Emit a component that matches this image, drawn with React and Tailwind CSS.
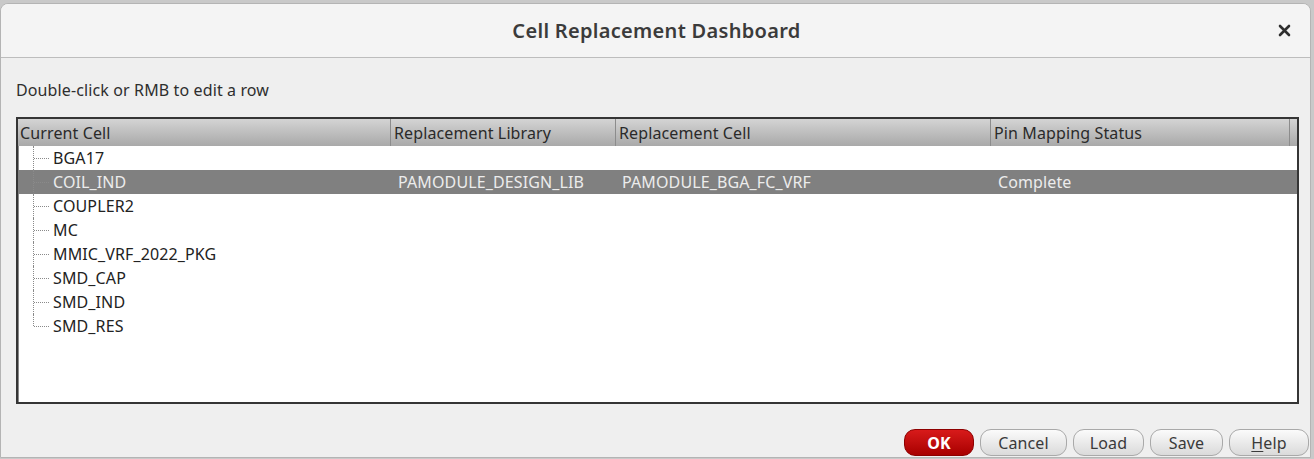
import React from 'react';

const rows = [
  { cell: 'BGA17' },
  { cell: 'COIL_IND', lib: 'PAMODULE_DESIGN_LIB', rep: 'PAMODULE_BGA_FC_VRF', status: 'Complete', selected: true },
  { cell: 'COUPLER2' },
  { cell: 'MC' },
  { cell: 'MMIC_VRF_2022_PKG' },
  { cell: 'SMD_CAP' },
  { cell: 'SMD_IND' },
  { cell: 'SMD_RES' },
];

// dotted tree connector for a row; the last row gets an elbow
function TreeLine({ last }) {
  return (
    <div className="relative w-[35px] h-full shrink-0">
      <div
        className={`absolute left-[15px] top-0 border-l border-dotted border-[#8a8a8a] ${last ? 'h-[12px]' : 'h-full'}`}
      />
      <div className="absolute left-[16px] top-[12px] w-[15px] border-t border-dotted border-[#8a8a8a]" />
    </div>
  );
}

function Button({ children, primary, className = '' }) {
  return (
    <button
      type="button"
      className={`h-[27px] rounded-[11px] text-[16px] leading-none flex items-center justify-center ${
        primary
          ? 'bg-gradient-to-b from-[#d81a1a] to-[#a80000] text-white font-bold border border-[#8e0000]'
          : 'bg-gradient-to-b from-[#fbfbfb] to-[#dadada] text-[#3a3a3a] border border-[#a9a9a9]'
      } ${className}`}
    >
      {children}
    </button>
  );
}

export default function App() {
  return (
    <div className="w-[1314px] h-[459px] bg-[#c9c9c9] pt-[3px] overflow-hidden font-['Noto_Sans',sans-serif]">
      <div className="w-[1311px] h-[455px] bg-[#efefef] border border-[#b4b4b4] rounded-t-[8px] flex flex-col overflow-hidden">
        {/* title bar */}
        <div className="h-[54px] shrink-0 bg-[#f4f4f4] border-b border-[#bdbdbd] flex items-center relative">
          <div className="flex-1 text-center text-[20px] font-semibold tracking-[0.3px] text-[#3b3b3b] pl-[2px]">
            Cell Replacement Dashboard
          </div>
          <svg className="absolute right-[19px] top-[20px]" width="13" height="13" viewBox="0 0 13 13">
            <path d="M2 2L11 11M11 2L2 11" stroke="#2e2e2e" strokeWidth="2.6" strokeLinecap="round" />
          </svg>
        </div>

        {/* body */}
        <div className="flex-1 flex flex-col px-[15px] text-[16px] tracking-[0.12px]">
          <div className="h-[59px] flex items-center pt-[4px] text-[#2e2e2e]">
            Double-click or RMB to edit a row
          </div>

          <div className="w-[1283px] h-[287px] border-2 border-[#353535] bg-white flex flex-col shadow-[inset_1px_1px_0_#888]">
            {/* header */}
            <div className="h-[27px] shrink-0 flex bg-gradient-to-b from-[#d4d4d4] to-[#a9a9a9] text-[#2a2a2a]">
              <div className="w-[373px] pl-[2px] flex items-center border-r border-[#8c8c8c]">Current Cell</div>
              <div className="w-[225px] pl-[3px] flex items-center border-r border-[#8c8c8c]">Replacement Library</div>
              <div className="w-[375px] pl-[3px] flex items-center border-r border-[#8c8c8c]">Replacement Cell</div>
              <div className="w-[299px] pl-[3px] flex items-center border-r border-[#8c8c8c]">Pin Mapping Status</div>
              <div className="flex-1" />
            </div>

            {/* rows */}
            {rows.map((r, i) => (
              <div
                key={r.cell}
                className={`h-[24px] shrink-0 flex items-center ${
                  r.selected ? 'bg-[#808080] text-[#ececec]' : 'text-[#222]'
                }`}
              >
                <div className="w-[373px] h-full flex items-center">
                  <TreeLine last={i === rows.length - 1} />
                  <span>{r.cell}</span>
                </div>
                <div className="w-[225px] pl-[7px]">{r.lib}</div>
                <div className="w-[375px] pl-[6px]">{r.rep}</div>
                <div className="w-[299px] pl-[7px]">{r.status}</div>
              </div>
            ))}
          </div>

          {/* buttons */}
          <div className="flex justify-end gap-[6px] mt-[25px] mr-[-14px]">
            <Button primary className="w-[70px]">OK</Button>
            <Button className="w-[87px]">Cancel</Button>
            <Button className="w-[71px]">Load</Button>
            <Button className="w-[73px]">Save</Button>
            <Button className="w-[80px]">
              <span className="underline underline-offset-2">H</span>elp
            </Button>
          </div>
        </div>
      </div>
    </div>
  );
}
